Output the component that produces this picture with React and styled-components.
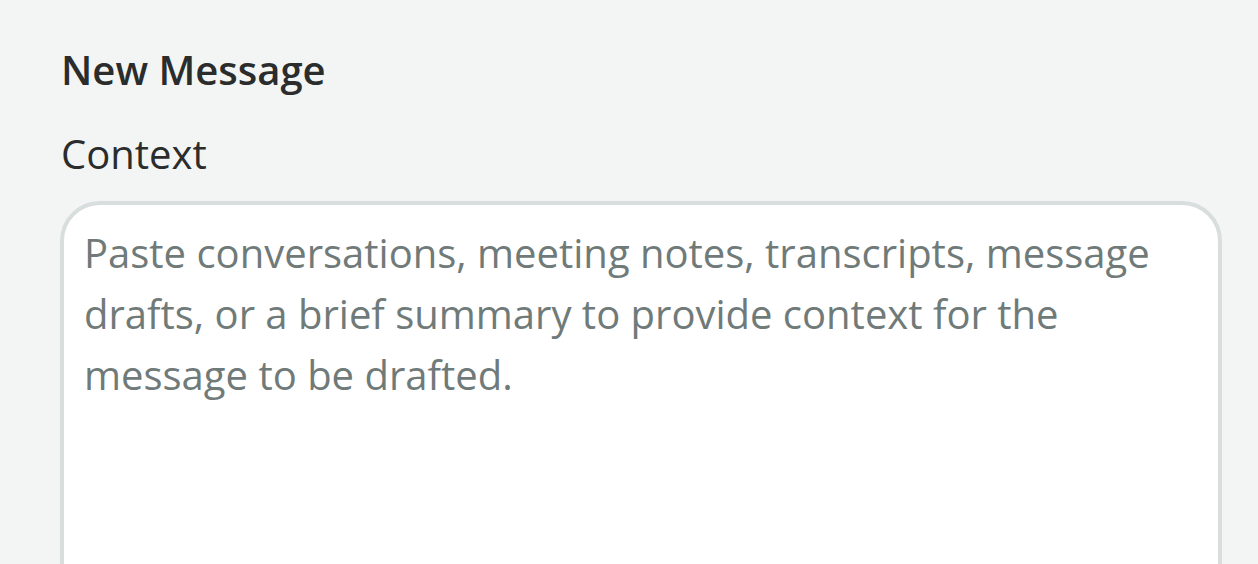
import React from 'react';
import styled, { createGlobalStyle } from 'styled-components';

const GlobalStyle = createGlobalStyle`
  html, body {
    margin: 0;
    padding: 0;
    background-color: #f3f5f4;
    font-family: "Open Sans", "Noto Sans", sans-serif;
  }
`;

const Page = styled.div`
  width: 1258px;
  height: 564px;
  overflow: hidden;
  box-sizing: border-box;
  padding: 43px 36px 0 60px;
  display: flex;
  flex-direction: column;
`;

const Heading = styled.h2`
  margin: 0 0 0 1px;
  font-size: 40px;
  font-weight: 600;
  line-height: 54px;
  color: #2b2c2c;
`;

const Label = styled.label`
  margin: 30px 0 0 1px;
  font-size: 40px;
  font-weight: 400;
  line-height: 54px;
  color: #2b2c2c;
`;

const TextArea = styled.textarea`
  margin-top: 20px;
  width: 100%;
  height: 440px;
  flex-shrink: 0;
  box-sizing: border-box;
  padding: 17px 20px;
  border: 4px solid #d8dedd;
  border-radius: 40px;
  background: #ffffff;
  resize: none;
  outline: none;
  font-family: "Open Sans", "Noto Sans", sans-serif;
  font-size: 40px;
  line-height: 61px;
  color: #2b2c2c;

  &::placeholder {
    color: #6f7a79;
    opacity: 1;
  }
`;

const App = () => {
  return (
    <Page>
      <GlobalStyle />
      <Heading>New Message</Heading>
      <Label htmlFor="context">Context</Label>
      <TextArea
        id="context"
        placeholder="Paste conversations, meeting notes, transcripts, message drafts, or a brief summary to provide context for the message to be drafted."
      />
    </Page>
  );
};

export default App;
